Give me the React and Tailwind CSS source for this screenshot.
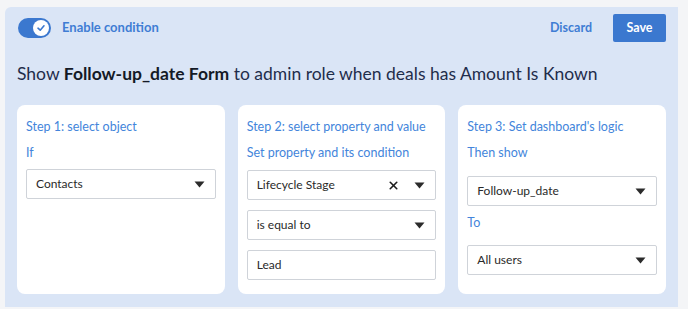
import { X } from 'lucide-react';

const font = { fontFamily: 'Lato, "Noto Sans", sans-serif' };

function Caret() {
  return (
    <svg width="11" height="7" viewBox="0 0 11 7" className="shrink-0">
      <path d="M0.5 0.5 L10.5 0.5 L5.5 6.5 Z" fill="#2b2b2b" />
    </svg>
  );
}

function SelectBox({ value, clearable }) {
  return (
    <div className="flex h-[30px] items-center rounded-[2px] border border-[#cfd3d9] bg-white pl-[9px] pr-[10px] text-[12px] text-[#2a2a2a]">
      <span className="flex-1">{value}</span>
      {clearable && <X size={13} strokeWidth={3} className="mr-[14px] text-[#1c1c1c]" />}
      <Caret />
    </div>
  );
}

function Card({ children }) {
  return <div className="flex flex-col rounded-[8px] bg-white px-[9px] pt-[14px]">{children}</div>;
}

export default function App() {
  return (
    <div className="h-[309px] w-[688px] bg-[#f4f5f7] pl-[5px] pr-[10px] pt-[7px]" style={font}>
      <div className="h-[300px] rounded-tl-[6px] bg-[#dae5f6] px-[12px]">
        <div className="flex h-[42px] items-center">
          <div className="ml-[1px] flex h-[20px] w-[33px] items-center justify-end rounded-full bg-[#3b78cf] pr-[2px]">
            <div className="flex h-[16px] w-[16px] items-center justify-center rounded-full bg-white">
              <svg width="10" height="10" viewBox="0 0 10 10">
                <path d="M2 5.2 L4.2 7.2 L8 2.8" fill="none" stroke="#3b78cf" strokeWidth="1.6" strokeLinecap="round" strokeLinejoin="round" />
              </svg>
            </div>
          </div>
          <span className="ml-[11px] text-[13px] font-bold text-[#3f7dd4]">Enable condition</span>
          <div className="ml-auto flex items-center">
            <button className="mr-[21px] text-[12.5px] font-bold text-[#3f7dd4]">Discard</button>
            <button className="h-[28px] w-[53px] rounded-[2px] bg-[#3b78cf] text-[12.5px] font-bold text-white">Save</button>
          </div>
        </div>
        <div className="mt-[13px] text-[17.5px] leading-[24px] text-[#1f2d4b]">
          Show <span className="font-bold text-[#141a26]">Follow-up_date Form</span> to admin role when deals has Amount Is Known
        </div>
        <div className="mt-[19px] grid h-[189px] grid-cols-3 gap-[13px]">
          <Card>
            <div className="text-[12.5px] leading-[16px] text-[#4385db]">Step 1: select object</div>
            <div className="mt-[10px] text-[12.5px] leading-[16px] text-[#4385db]">If</div>
            <div className="mt-[8px]"><SelectBox value="Contacts" /></div>
          </Card>
          <Card>
            <div className="text-[12.5px] leading-[16px] text-[#4385db]">Step 2: select property and value</div>
            <div className="mt-[10px] text-[12.5px] leading-[16px] text-[#4385db]">Set property and its condition</div>
            <div className="mt-[9px] flex flex-col gap-[10px]">
              <SelectBox value="Lifecycle Stage" clearable />
              <SelectBox value="is equal to" />
              <div className="flex h-[30px] items-center rounded-[2px] border border-[#cfd3d9] bg-white pl-[9px] text-[12px] text-[#2a2a2a]">Lead</div>
            </div>
          </Card>
          <Card>
            <div className="text-[12.5px] leading-[16px] text-[#4385db]">Step 3: Set dashboard's logic</div>
            <div className="mt-[10px] text-[12.5px] leading-[16px] text-[#4385db]">Then show</div>
            <div className="mt-[15px]"><SelectBox value="Follow-up_date" /></div>
            <div className="mt-[9px] text-[12.5px] leading-[16px] text-[#4385db]">To</div>
            <div className="mt-[14px]"><SelectBox value="All users" /></div>
          </Card>
        </div>
      </div>
    </div>
  );
}
